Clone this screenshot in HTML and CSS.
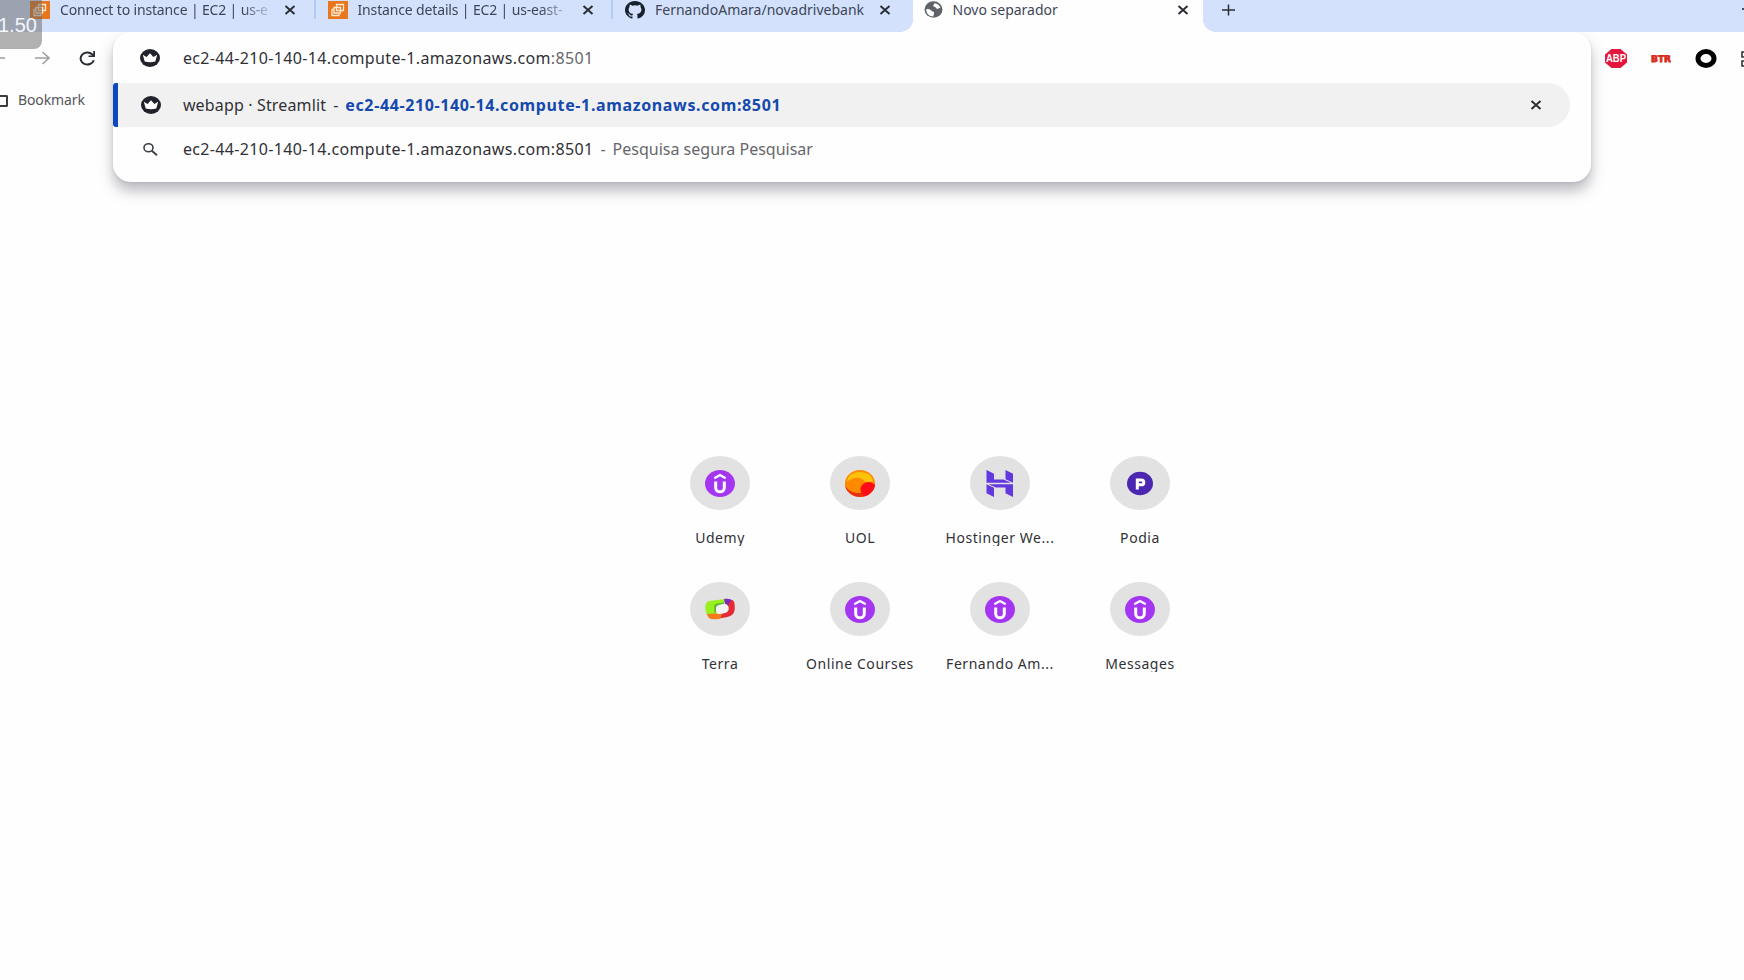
FILE: index.html
```html
<!DOCTYPE html>
<html lang="pt">
<head>
<meta charset="utf-8">
<title>Novo separador</title>
<link rel="stylesheet" href="styles.css">
</head>
<body>
<svg class="defs" aria-hidden="true">
  <symbol id="ec2" viewBox="0 0 20 18"><rect width="20" height="18" fill="#e8761c"/><g fill="none" stroke="#ffe9d2" stroke-width="1.3"><path d="M8.500 3.500h7v6h-7z"/><path d="M6 6.500h6.500v5.500H6z"/><path d="M6 8.500H4v6h7v-2"/></g></symbol>
  <symbol id="close" viewBox="0 0 12 10"><path d="M1.500 1 10.500 9M10.500 1 1.500 9" stroke="#2a2d33" stroke-width="1.900"/></symbol>
  <symbol id="crown" viewBox="0 0 20 18"><ellipse cx="10" cy="9" rx="10" ry="9" fill="#22222c"/><path d="M2.800 5.800 6.600 8 10 4.300 13.400 8l3.800-2.200L15.300 12.500Q10 13.800 4.700 12.500Z" fill="#fff"/></symbol>
  <symbol id="udemy" viewBox="0 0 30 27"><ellipse cx="15" cy="13.500" rx="15" ry="13.500" fill="#a435f0"/><path d="M9.300 8.300 15 5l5.700 3.300" fill="none" stroke="#fff" stroke-width="2.200"/><path d="M10.700 11.500v6.300c0 5.400 8.600 5.400 8.600 0v-6.300" fill="none" stroke="#fff" stroke-width="3"/></symbol>
</svg>

<header class="tabs">
  <div class="tab first"><svg class="fav"><use href="#ec2"/></svg><span class="title fade">Connect to instance | EC2 | us-e</span><svg class="x"><use href="#close"/></svg></div>
  <div class="tab ruled"><svg class="fav"><use href="#ec2"/></svg><span class="title fade">Instance details | EC2 | us-east-</span><svg class="x"><use href="#close"/></svg></div>
  <div class="tab ruled"><svg class="fav" viewBox="0 0 16 16" preserveAspectRatio="none"><path fill="#17212b" d="M8 0C3.580 0 0 3.580 0 8c0 3.540 2.290 6.530 5.470 7.590.4.070.55-.17.55-.38 0-.19-.01-.82-.01-1.490-2.010.37-2.530-.49-2.690-.94-.09-.23-.48-.94-.82-1.130-.28-.15-.68-.52-.01-.53.63-.01 1.080.58 1.230.82.72 1.210 1.870.87 2.330.66.07-.52.28-.87.51-1.070-1.780-.2-3.640-.89-3.640-3.950 0-.87.31-1.590.82-2.150-.08-.2-.36-1.020.08-2.120 0 0 .67-.21 2.200.82a7.600 7.600 0 0 1 4 0c1.530-1.040 2.200-.82 2.200-.82.44 1.100.16 1.920.08 2.120.51.56.82 1.270.82 2.150 0 3.070-1.870 3.750-3.650 3.950.29.25.54.73.54 1.480 0 1.070-.01 1.930-.01 2.200 0 .21.15.46.55.38A8 8 0 0 0 16 8c0-4.420-3.580-8-8-8"/></svg><span class="title">FernandoAmara/novadrivebank</span><svg class="x"><use href="#close"/></svg></div>
  <div class="tab active"><svg class="fav globe" viewBox="0 0 18 17"><ellipse cx="9" cy="8.500" rx="9" ry="8.300" fill="#5f6368"/><path fill="#fff" d="M1.800 8c2 0 4 .3 5 1.600s2.200.7 2.700 2-.8 2-.5 3.900C4.500 15.500 1.300 12 1.800 8zM10 2.200c3 .2 5.300 2.300 6 5-1.300-.6-2.200.8-3.500.6-1.600-.3-1-1.800-2.500-2-1.600-.2-1.800-1.300-.8-1.800z"/></svg><span class="title">Novo separador</span><svg class="x"><use href="#close"/></svg></div>
  <svg class="plus" viewBox="0 0 14 12"><path d="M7 0v12M0 6h14" stroke="#2a2d33" stroke-width="1.600"/></svg>
  <i class="minimize"></i>
</header>

<div class="toolbar">
  <div class="left">
    <div class="nav">
      <svg class="arrow back" viewBox="0 0 15 14"><path d="M15 7H1" fill="none" stroke="#a0a0a3" stroke-width="1.600"/></svg>
      <svg class="arrow" viewBox="0 0 15 14"><path d="M0 7h14M7.500 1 14 7 7.500 13" fill="none" stroke="#a0a0a3" stroke-width="1.600"/></svg>
      <svg class="reload" viewBox="0 0 17 15"><path d="M14.800 9.200A6.700 6 0 1 1 13.300 3.500L15 5.200" fill="none" stroke="#2a2d33" stroke-width="2"/><path d="M16 0v6H9.500V4.500h4.700V0z" fill="#2a2d33"/></svg>
    </div>
    <div class="bookmark"><i></i><b>Bookmark</b></div>
  </div>
  <main class="omnibox">
    <div class="row input"><svg class="site"><use href="#crown"/></svg><b class="host">ec2-44-210-140-14.compute-1.amazonaws.com<span class="dim">:8501</span></b></div>
    <div class="row selected"><svg class="site"><use href="#crown"/></svg><b class="name">webapp · Streamlit</b><b class="dash">-</b><b class="url">ec2-44-210-140-14.compute-1.amazonaws.com:8501</b><svg class="x"><use href="#close"/></svg></div>
    <div class="row"><svg class="search" viewBox="0 0 15 13"><ellipse cx="5.500" cy="4.800" rx="4.500" ry="4" fill="none" stroke="#3c3f44" stroke-width="1.600"/><path d="M8.800 7.700 14 12.300" stroke="#3c3f44" stroke-width="1.900"/></svg><b class="host">ec2-44-210-140-14.compute-1.amazonaws.com:8501</b><b class="dash dim">-</b><b class="dim">Pesquisa segura Pesquisar</b></div>
  </main>
  <div class="ext">
    <svg class="abp" viewBox="0 0 22 19"><path d="M6.500 0h9L22 5.500v8L15.500 19h-9L0 13.500v-8z" fill="#e3173e"/><text x="11" y="13.200" text-anchor="middle" textLength="20" lengthAdjust="spacingAndGlyphs">ABP</text></svg>
    <svg class="btr" viewBox="0 0 20 8"><text x="0" y="7" textLength="20" lengthAdjust="spacingAndGlyphs">BTR</text></svg>
    <svg class="ring" viewBox="0 0 22 19"><ellipse cx="11" cy="9.500" rx="8" ry="7" fill="#fff" stroke="#000" stroke-width="5"/></svg>
    <svg class="grid" viewBox="0 0 3 16"><path d="M3 1H1v5h2M3 10H1v5h2" fill="none" stroke="#333" stroke-width="1.600"/></svg>
  </div>
</div>

<section class="shortcuts">
  <a><span class="disc"><svg><use href="#udemy"/></svg></span><b>Udemy</b></a>
  <a><span class="disc"><svg viewBox="0 0 30 27"><defs><clipPath id="uc"><ellipse cx="15" cy="13.500" rx="15" ry="13.500"/></clipPath></defs><g clip-path="url(#uc)"><path d="M0 0h30v27H0z" fill="#ff8a00"/><path d="M0 15c3 6 8 8.500 16 8l4-4 10-5v13H0z" fill="#e8300f"/><path d="M2 12C2-1.500 28-1.500 28 12c-3-.8-5 0-6.500 1.500C17 5.500 7 6.500 2 12z" fill="#ffc20a"/><ellipse cx="23.500" cy="19.500" rx="8" ry="7.500" fill="#ff0d16"/></g></svg></span><b>UOL</b></a>
  <a><span class="disc"><svg viewBox="0 0 30 27"><g fill="#6238df"><path d="M1.500 0 9 3.800v5.700h9.500l7.500 3.300H1.500zM20.500 0 28 3.800v9l-7.500-3.600zM28 27l-7.500-3.800v-5.700H11l-7.500-3.300H28zM9 27 1.500 23.200v-9L9 17.800z"/></g></svg></span><b>Hostinger We...</b></a>
  <a><span class="disc"><svg viewBox="0 0 30 27"><ellipse cx="15" cy="13.500" rx="13" ry="11.700" fill="#4b26b0"/><path d="M12.300 19.500V10h4a2.500 2.400 0 0 1 0 4.800h-4" fill="none" stroke="#fff" stroke-width="3"/></svg></span><b>Podia</b></a>
  <a><span class="disc"><svg viewBox="0 0 30 27"><path d="M2 19C-1 12 0 6 4 5L20 3l-1 5c-7 0-9 2-8 6l1 6z" fill="#98f01f"/><path d="M9 9.500Q10 7 19 6.500V9l-8 2v5l-1.500 1z" fill="#62b62c"/><path d="M19 3c5-.5 7 0 8.500 2l-3 6L20 8z" fill="#7c2bb8"/><path d="M26.500 4C29.500 4 30 8 29.700 13c-.4 5-3.200 7-7.200 8L14 22.500l1-5c6-.5 8-1 8.700-4 .3-2 0-4-.7-4.500z" fill="#e62a31"/><path d="M2 18 10.500 17.500 17 18 15.500 22.400C8 24 3.500 24 2 18z" fill="#f17b1d"/><path d="M11 11.500Q12 8.300 20 7.700 23 8 23 12 22.500 16.500 19 17.300 14 18.500 12.500 17.500 11 15 11 11.500z" fill="#f3f3f5"/></svg></span><b>Terra</b></a>
  <a><span class="disc"><svg><use href="#udemy"/></svg></span><b>Online Courses</b></a>
  <a><span class="disc"><svg><use href="#udemy"/></svg></span><b>Fernando Am...</b></a>
  <a><span class="disc"><svg><use href="#udemy"/></svg></span><b>Messages</b></a>
</section>

<div class="speed">1.50</div>
</body>
</html>
```
FILE: styles.css
```css
* { box-sizing: border-box; }
body { margin: 0; width: 1744px; height: 980px; overflow: hidden; background: #fefefe; color: #303136; font: 14px "Noto Sans", "Open Sans", sans-serif; }
b { font-weight: 400; white-space: nowrap; }
svg { display: block; flex: none; }
.defs { position: absolute; width: 0; height: 0; }

.tabs { display: flex; height: 32px; padding-left: 16px; background: #d3e1fd; }
.tab { display: flex; width: 297.500px; height: 19px; padding-left: 14px; align-items: center; flex: none; }
.tab.ruled { padding-left: 12px; border-left: 2px solid #b2cbf7; }
.fav { width: 20px; height: 18px; margin-right: 10px; }
.title { width: 212px; white-space: nowrap; line-height: 19px; color: #3e4656; }
.fade { letter-spacing: -.15px; -webkit-mask-image: linear-gradient(to right, #000 86%, rgba(0, 0, 0, .1)); mask-image: linear-gradient(to right, #000 86%, rgba(0, 0, 0, .1)); }
.x { width: 12px; height: 10px; margin-left: 12px; }
.tab.active { position: relative; width: 290px; height: 32px; margin-left: 4px; padding: 0 0 13px 11px; background: #fefefe; }
.tab.active::before, .tab.active::after { content: ""; position: absolute; bottom: 0; width: 13px; height: 12px; }
.tab.active::before { right: 100%; background: radial-gradient(ellipse 13px 12px at 0 0, transparent 98%, #fefefe); }
.tab.active::after { left: 100%; background: radial-gradient(ellipse 13px 12px at 100% 0, transparent 98%, #fefefe); }
.active .globe { width: 19px; height: 17px; margin-right: 10px; }
.plus { width: 13px; height: 12px; margin: 4px 0 0 19px; }
.minimize { width: 2px; height: 2px; margin: 8px 0 0 auto; background: #4a4f5a; }

.toolbar { display: flex; height: 150px; }
.left { width: 113px; }
.nav { display: flex; align-items: center; height: 52px; }
.arrow { width: 15px; height: 14px; margin-right: 29px; }
.back { margin-left: -10px; margin-right: 30px; }
.reload { width: 17px; height: 15px; }
.bookmark { display: flex; align-items: center; height: 34px; color: #55565b; }
.bookmark i { width: 8px; height: 12px; margin-right: 10px; border: 2px solid #3c3d42; border-left: 0; border-radius: 0 2px 2px 0; }
.bookmark b { padding-bottom: 3px; letter-spacing: -.1px; }
.omnibox { width: 1479.500px; height: 149.500px; border-radius: 18px; background: #fefefe; box-shadow: 0 9px 14px rgba(60, 60, 75, .34), 0 1px 3px rgba(60, 60, 75, .1); clip-path: inset(0 -30px -40px -30px); font-size: 16px; }
.row { display: flex; align-items: center; height: 44.500px; padding-left: 27px; }
.row.input { height: 50.500px; padding-top: 2px; }
.site { width: 20px; height: 18px; margin-right: 23px; }
.search { width: 15px; height: 13px; margin: 0 25px 0 3px; }
.selected { width: 1457.500px; border-left: 5px solid #0b49bf; border-radius: 3px 22px 22px 3px; background: #f1f1f1; padding: 0 28px 0 23px; }
.selected .site { margin-right: 22px; }
.selected .x { margin-left: auto; }
.host { letter-spacing: .35px; }
.name { letter-spacing: .15px; }
.dash { margin: 0 7px; }
.dim { color: #66676b; }
.url { color: #1549ad; font-weight: 700; letter-spacing: .63px; }
.ext { display: flex; align-items: center; height: 53px; padding-left: 13.500px; }
.abp { width: 22px; height: 19px; }
.abp text { font: bold 10.500px "Liberation Sans", sans-serif; fill: #fff; }
.btr { width: 20px; height: 8px; margin-left: 24px; }
.btr text { font: bold 8px "DejaVu Sans", sans-serif; fill: #d92b1c; stroke: #d92b1c; stroke-width: .8px; }
.ring { width: 22px; height: 19px; margin-left: 24px; }
.grid { width: 3px; height: 16px; margin-left: 24.500px; }

.shortcuts { display: grid; grid-template-columns: repeat(4, 140px); grid-auto-rows: 126px; margin: 274px 0 0 650px; width: 560px; }
.shortcuts a { display: flex; flex-direction: column; align-items: center; }
.disc { display: flex; width: 60px; height: 54px; border-radius: 50%; background: #e2e2e3; align-items: center; justify-content: center; }
.disc svg { width: 30px; height: 27px; }
.shortcuts b { margin-top: 18px; height: 18px; line-height: 20px; overflow: hidden; letter-spacing: .55px; }

.speed { position: absolute; left: 0; top: 0; width: 42px; height: 49px; padding-top: 14px; border-radius: 0 0 8px 0; background: rgba(100, 100, 100, .5); color: #f4f6fa; font: 20px/22px "Liberation Sans", sans-serif; text-indent: -2px; white-space: nowrap; }
```
